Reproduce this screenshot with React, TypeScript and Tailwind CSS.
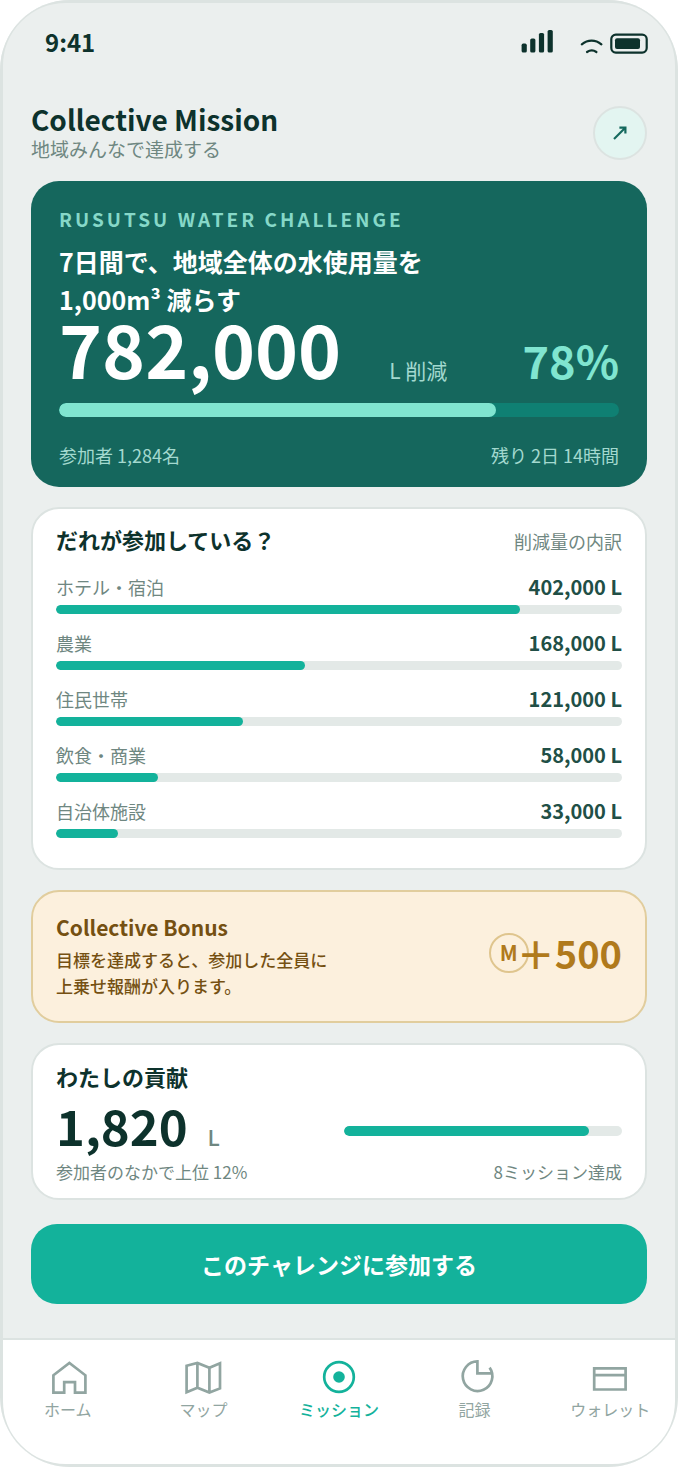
import React, { useState } from 'react';

interface BreakdownItem {
    label: string;
    amount: string;
    percent: number;
}

const breakdown: BreakdownItem[] = [
    { label: 'ホテル・宿泊', amount: '402,000 L', percent: 82 },
    { label: '農業', amount: '168,000 L', percent: 44 },
    { label: '住民世帯', amount: '121,000 L', percent: 33 },
    { label: '飲食・商業', amount: '58,000 L', percent: 18 },
    { label: '自治体施設', amount: '33,000 L', percent: 11 },
];

const tabs = [
    { id: 'home', label: 'ホーム', icon: <path d="M3.4 15.3 19.4 3l16 12.3v17.300H25V22.200H14.200v10.400H3.400z" /> },
    {
        id: 'map',
        label: 'マップ',
        icon: <path d="M1.6 5.7 12.4 3l12 4.7L35 3.2v25.2l-10.6 4.2-12-4.8-10.800 4.400zM12.400 3v24.800M24.400 7.700v24.900" />,
    },
    {
        id: 'mission',
        label: 'ミッション',
        icon: (
            <>
                <circle cx="18" cy="17" r="14.8" />
                <circle cx="18" cy="17" r="5.8" fill="currentColor" stroke="none" />
            </>
        ),
    },
    { id: 'record', label: '記録', icon: <path d="M32.600 7.600A14.800 14.800 0 1 1 20.400 1.400v12h14.600" /> },
    { id: 'wallet', label: 'ウォレット', icon: <path d="M2.2 8.3h31.4v21.2H2.2zM2.2 15.2h31.4" /> },
];

const Progress: React.FC<{ label: string; percent: number; track: string; fill: string }> = ({ label, percent, track, fill }) => (
    <div
        role="progressbar"
        aria-label={label}
        aria-valuenow={percent}
        aria-valuemin={0}
        aria-valuemax={100}
        className={`w-full rounded-full overflow-hidden ${track}`}
    >
        <div className={`h-full rounded-full ${fill}`} style={{ width: `${percent}%` }} />
    </div>
);

const StatusBar: React.FC = () => (
    <div className="flex items-center justify-between h-[28px] pl-[45px] pr-[30px] text-[#0d322c]">
        <span className="text-[24px] leading-[28px] font-bold">9:41</span>
        <div className="flex items-center">
            <svg width="32" height="24" viewBox="0 0 32 24" fill="currentColor" className="mr-[27px]">
                <rect x="0.6" y="13.6" width="5.2" height="9" rx="1.6" />
                <rect x="9.2" y="8.4" width="5.2" height="14.2" rx="1.6" />
                <rect x="17.9" y="3" width="5.2" height="19.6" rx="1.6" />
                <rect x="26.6" y="0" width="5.2" height="22.6" rx="1.6" />
            </svg>
            <svg width="24" height="24" viewBox="0 0 24 24" fill="none" stroke="currentColor" strokeWidth="2.2" strokeLinecap="round" className="mr-[6px]">
                <path d="M1.8 14.4c6-5 13.6-5 19.6 0M7 22c3-2 6.6-2 9.4 0" />
            </svg>
            <svg width="38" height="24" viewBox="0 0 38 24">
                <rect x="1.3" y="4.6" width="35.4" height="18" rx="4.5" fill="none" stroke="currentColor" strokeWidth="2.2" />
                <rect x="5" y="8.3" width="25" height="10.6" rx="2" fill="currentColor" />
            </svg>
        </div>
    </div>
);

const App: React.FC = () => {
    const [activeTab, setActiveTab] = useState('mission');

    return (
        <div className="relative flex flex-col min-h-screen rounded-[70px] overflow-hidden bg-[#ebefee] pt-[28px] font-['Noto_Sans_CJK_JP',sans-serif] text-[#0d322c]">
            <StatusBar />

            <main className="flex flex-col px-[31px] pt-[47px] pb-[34px]">
                <header className="flex items-center justify-between mb-[18px]">
                    <div>
                        <h1 className="text-[28px] leading-[32px] font-bold">Collective Mission</h1>
                        <p className="text-[19px] leading-[28px] text-[#6f8781]">地域みんなで達成する</p>
                    </div>
                    <button
                        type="button"
                        aria-label="共有"
                        className="flex items-center justify-center w-[54px] h-[54px] rounded-full bg-[#e3f5f1] border-2 border-[#dce3e1] text-[#15695e]"
                    >
                        <svg width="16" height="16" viewBox="0 0 16 16" fill="none" stroke="currentColor" strokeWidth="2.2">
                            <path d="M2 14 13 3" />
                            <path d="M7.4 2.6h6v6" />
                            <path d="M10 2.6h3.4V6z" fill="currentColor" stroke="none" />
                        </svg>
                    </button>
                </header>

                <section className="rounded-[28px] bg-[#15675d] px-[28px] pt-[23px] pb-[18px] text-white">
                    <p className="text-[19px] leading-[30px] font-bold tracking-[3px] text-[#86d8c8]">RUSUTSU WATER CHALLENGE</p>
                    <h2 className="mt-[8px] text-[25px] leading-[38px] font-bold">
                        7日間で、地域全体の水使用量を
                        <br />
                        1,000m³ 減らす
                    </h2>
                    <div className="flex items-baseline">
                        <span className="text-[73px] leading-[58px] font-bold">782,000</span>
                        <span className="ml-12 text-[21px] leading-none text-[#a3d9cf]">L 削減</span>
                        <span className="ml-auto text-[45px] leading-none font-bold text-[#80e5d0]">78%</span>
                    </div>
                    <div className="mt-[21px]">
                        <Progress label="地域全体の達成率" percent={78} track="h-[14px] bg-[#0f8073]" fill="bg-[#80e5d0]" />
                    </div>
                    <div className="mt-[24px] flex justify-between text-[18px] leading-[28px] text-[#a3d9cf]">
                        <span>参加者 1,284名</span>
                        <span>残り 2日 14時間</span>
                    </div>
                </section>

                <section className="mt-[20px] rounded-[28px] border-2 border-[#dce3e1] bg-white px-[23px] pt-[15px] pb-[30px]">
                    <div className="flex items-baseline justify-between leading-[30px]">
                        <h2 className="text-[22px] font-bold">だれが参加している？</h2>
                        <span className="text-[18px] text-[#6f8781]">削減量の内訳</span>
                    </div>
                    <ul className="mt-[19px] flex flex-col gap-[17px]">
                        {breakdown.map((item) => (
                            <li key={item.label}>
                                <div className="mb-[6px] flex items-center justify-between leading-[24px]">
                                    <span className="text-[18px] text-[#6f8781]">{item.label}</span>
                                    <span className="text-[20px] font-bold text-[#214f46]">{item.amount}</span>
                                </div>
                                <Progress label={item.label} percent={item.percent} track="h-[9px] bg-[#e3e9e7]" fill="bg-[#13b29b]" />
                            </li>
                        ))}
                    </ul>
                </section>

                <section className="mt-[20px] flex items-center justify-between rounded-[28px] border-2 border-[#e1cd9d] bg-[#fcf0dd] px-[23px] pt-[19px] pb-[22px]">
                    <div className="text-[#755012]">
                        <h2 className="mb-[4px] text-[21px] leading-[32px] font-bold">Collective Bonus</h2>
                        <p className="text-[17px] leading-[26px] font-medium">
                            目標を達成すると、参加した全員に
                            <br />
                            上乗せ報酬が入ります。
                        </p>
                    </div>
                    <div className="flex items-center pb-[5px] font-bold text-[#b07a1c]">
                        <span className="flex items-center justify-center w-[40px] h-[40px] rounded-full border-2 border-[#dfc58e] text-[21px] leading-none">M</span>
                        <span className="-ml-3 text-[38px] leading-none">＋500</span>
                    </div>
                </section>

                <section className="mt-[20px] rounded-[28px] border-2 border-[#dce3e1] bg-white px-[23px] pt-[16px] pb-[14px]">
                    <h2 className="text-[22px] leading-[30px] font-bold">わたしの貢献</h2>
                    <div className="mt-[9px] grid grid-cols-2 gap-x-[10px] gap-y-[10px]">
                        <p className="flex items-baseline">
                            <span className="text-[49px] leading-[50px] font-bold">1,820</span>
                            <span className="ml-[20px] text-[22px] leading-none font-medium text-[#6f8781]">L</span>
                        </p>
                        <div className="self-end pb-[14px]">
                            <Progress label="わたしの貢献" percent={88} track="h-[10px] bg-[#e3e9e7]" fill="bg-[#13b29b]" />
                        </div>
                        <span className="text-[17px] leading-[24px] text-[#6f8781]">参加者のなかで上位 12%</span>
                        <span className="text-right text-[17px] leading-[24px] text-[#6f8781]">8ミッション達成</span>
                    </div>
                </section>

                <button type="button" className="mt-[24px] h-[80px] rounded-[26px] bg-[#13b29b] text-[23px] font-bold text-white">
                    このチャレンジに参加する
                </button>
            </main>

            <nav className="grid flex-1 grid-cols-5 border-t-2 border-[#dce3e1] bg-white pt-[20px] pb-[44px]">
                {tabs.map((tab) => (
                    <a
                        key={tab.id}
                        href={`#${tab.id}`}
                        onClick={() => setActiveTab(tab.id)}
                        className={`flex flex-col items-center text-[16px] leading-[26px] ${
                            activeTab === tab.id ? 'font-medium text-[#13b29b]' : 'text-[#91a5a1]'
                        }`}
                    >
                        <svg width="36" height="36" viewBox="0 0 36 36" fill="none" stroke="currentColor" strokeWidth="2.7" className="overflow-visible">
                            {tab.icon}
                        </svg>
                        {tab.label}
                    </a>
                ))}
            </nav>

            {/* device frame */}
            <div className="pointer-events-none absolute inset-0 rounded-[66px] border-3 border-[#dce3e1]" />
        </div>
    );
};

export default App;
